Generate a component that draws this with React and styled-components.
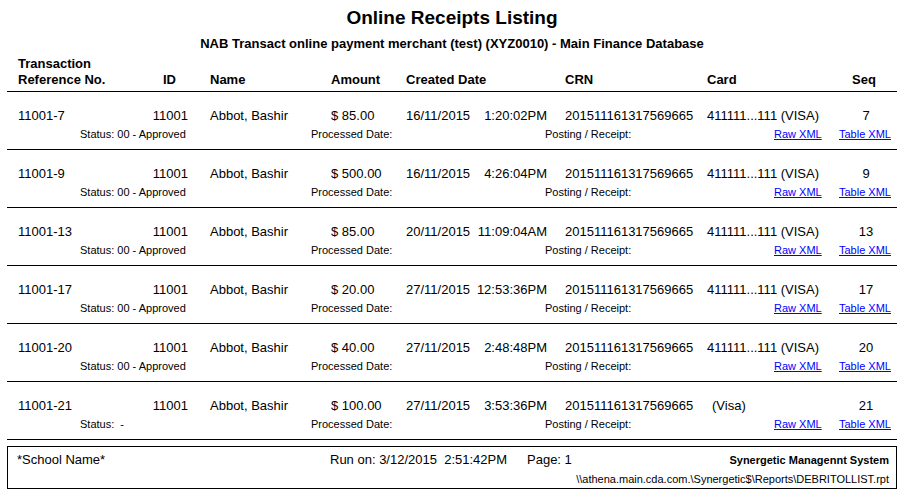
import React from "react";
import styled, {createGlobalStyle} from "styled-components";

const GlobalStyle = createGlobalStyle`
  body {
    margin: 0;
    background: #ffffff;
    color: #000000;
    font-family: "Liberation Sans", Arial, sans-serif;
  }
`;

const Page = styled.div`
  width: 902px;
  padding: 7px 5px 0 7px;
  box-sizing: border-box;
`;

const Title = styled.h1`
  margin: 0;
  font-size: 19px;
  line-height: 22px;
  font-weight: bold;
  text-align: center;
`;

const Subtitle = styled.h2`
  margin: 7px 0 0 0;
  font-size: 13px;
  line-height: 16px;
  font-weight: bold;
  text-align: center;
`;

const Columns = styled.div`
  display: grid;
  grid-template-columns: 82px 88px 143px 75px 68px 73px 160px 129px 60px;
  padding-left: 11px;
  font-size: 13px;
  line-height: 16px;
  white-space: pre;
`;

const HeaderRow = styled(Columns)`
  margin-top: 4px;
  padding-bottom: 3px;
  align-items: end;
  font-weight: bold;
  border-bottom: 1px solid #000000;
`;

const Cell = styled.div`
  text-align: ${({$align}) => $align || "left"};
  padding-left: ${({$inset}) => $inset || 0}px;
  padding-right: ${({$trail}) => $trail || 0}px;
  grid-column: ${({$span}) => ($span ? `span ${$span}` : "auto")};
`;

const Row = styled.div`
  padding: 16px 0 8px 0;
  border-bottom: 1px solid #000000;
`;

const SubLine = styled.div`
  display: grid;
  grid-template-columns: 62px 231px 234px 229px 65px 1fr;
  padding-left: 11px;
  margin-top: 3px;
  font-size: 11px;
  line-height: 14px;
  white-space: pre;
`;

const XmlLink = styled.a`
  color: #0000ff;
  text-decoration: underline;
`;

const Footer = styled.div`
  margin-top: 6px;
  border: 1px solid #000000;
  padding: 5px 7px 2px 9px;
  display: grid;
  grid-template-columns: 313px 197px 1fr auto;
  row-gap: 5px;
  font-size: 13px;
  line-height: 16px;
  white-space: pre;
`;

const SystemName = styled.div`
  font-size: 11px;
  font-weight: bold;
  text-align: right;
`;

const ReportPath = styled.div`
  grid-column: 1 / -1;
  font-size: 11px;
  line-height: 13px;
  text-align: right;
`;

const receipts = [
    {ref: "11001-7", amount: "$ 85.00", date: "16/11/2015", time: "1:20:02PM", card: "411111...111 (VISA)", seq: "7", status: "Status: 00 - Approved"},
    {ref: "11001-9", amount: "$ 500.00", date: "16/11/2015", time: "4:26:04PM", card: "411111...111 (VISA)", seq: "9", status: "Status: 00 - Approved"},
    {ref: "11001-13", amount: "$ 85.00", date: "20/11/2015", time: "11:09:04AM", card: "411111...111 (VISA)", seq: "13", status: "Status: 00 - Approved"},
    {ref: "11001-17", amount: "$ 20.00", date: "27/11/2015", time: "12:53:36PM", card: "411111...111 (VISA)", seq: "17", status: "Status: 00 - Approved"},
    {ref: "11001-20", amount: "$ 40.00", date: "27/11/2015", time: "2:48:48PM", card: "411111...111 (VISA)", seq: "20", status: "Status: 00 - Approved"},
    {ref: "11001-21", amount: "$ 100.00", date: "27/11/2015", time: "3:53:36PM", card: "(Visa)", cardInset: 5, seq: "21", status: "Status:  -"},
];

const Receipt = ({item}) => (
    <Row>
        <Columns>
            <Cell>{item.ref}</Cell>
            <Cell $align='right'>11001</Cell>
            <Cell $inset={22}>Abbot, Bashir</Cell>
            <Cell>{item.amount}</Cell>
            <Cell>{item.date}</Cell>
            <Cell $align='right'>{item.time}</Cell>
            <Cell $inset={18}>201511161317569665</Cell>
            <Cell $inset={item.cardInset}>{item.card}</Cell>
            <Cell $align='center'>{item.seq}</Cell>
        </Columns>
        <SubLine>
            <span/>
            <span>{item.status}</span>
            <span>Processed Date:</span>
            <span>Posting / Receipt:</span>
            <XmlLink href='#'>Raw XML</XmlLink>
            <XmlLink href='#'>Table XML</XmlLink>
        </SubLine>
    </Row>
);

const App = () => {
    return (
        <Page>
            <GlobalStyle/>
            <Title>Online Receipts Listing</Title>
            <Subtitle>NAB Transact online payment merchant (test) (XYZ0010) - Main Finance Database</Subtitle>
            <HeaderRow>
                <Cell>{"Transaction\nReference No."}</Cell>
                <Cell $align='right' $trail={12}>ID</Cell>
                <Cell $inset={22}>Name</Cell>
                <Cell>Amount</Cell>
                <Cell $span={2}>Created Date</Cell>
                <Cell $inset={18}>CRN</Cell>
                <Cell>Card</Cell>
                <Cell $align='center' $trail={4}>Seq</Cell>
            </HeaderRow>
            {receipts.map((item) => (
                <Receipt key={item.ref} item={item}/>
            ))}
            <Footer>
                <span>*School Name*</span>
                <span>Run on: 3/12/2015  2:51:42PM</span>
                <span>Page: 1</span>
                <SystemName>Synergetic Managennt System</SystemName>
                <ReportPath>\\athena.main.cda.com.\Synergetic$\Reports\DEBRITOLLIST.rpt</ReportPath>
            </Footer>
        </Page>
    );
};

export default App;
